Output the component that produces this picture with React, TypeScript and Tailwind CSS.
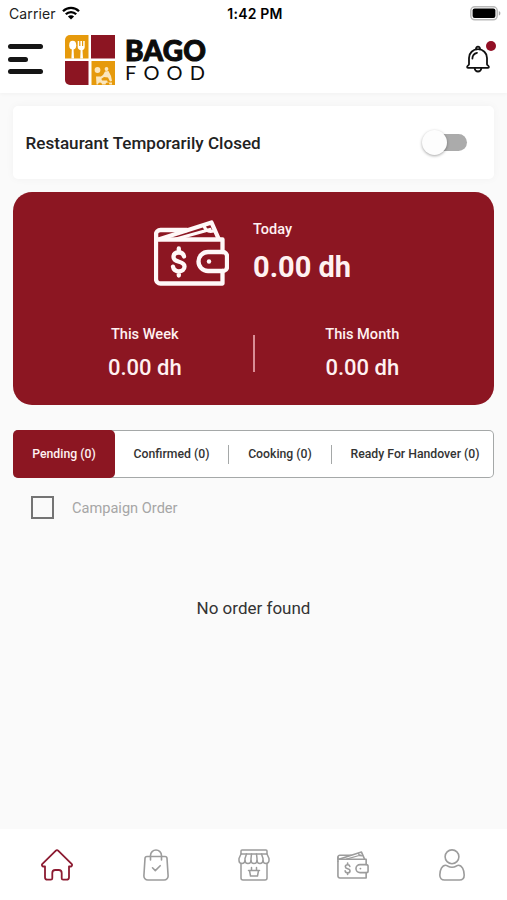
import React from 'react';
import { clsx } from 'clsx';

interface IconProps {
  className?: string;
}

interface WalletIconProps extends IconProps {
  strokeWidth?: number;
}

interface OrderTab {
  label: string;
  count: number;
  className: string;
}

const orderTabs: OrderTab[] = [
  { label: 'Pending', count: 0, className: 'w-[102px]' },
  { label: 'Confirmed', count: 0, className: 'w-[114px]' },
  { label: 'Cooking', count: 0, className: 'w-[103px]' },
  { label: 'Ready For Handover', count: 0, className: 'flex-1 pl-[5px]' },
];

// Icons
const WifiIcon: React.FC<IconProps> = ({ className }) => (
  <svg className={className} viewBox="0 0 18 14" fill="none" stroke="black" strokeWidth="2.3">
    <path d="M1 5.2a11.4 11.4 0 0 1 16 0" />
    <path d="M3.8 8.3a7.3 7.3 0 0 1 10.4 0" />
    <path d="M9 13.6 5.9 10.5a4.3 4.3 0 0 1 6.2 0z" fill="black" stroke="none" />
  </svg>
);

const BatteryIcon: React.FC<IconProps> = ({ className }) => (
  <svg className={className} viewBox="0 0 31 15" fill="none">
    <rect x="0.8" y="0.8" width="26.4" height="13" rx="4" stroke="#b9b9b9" strokeWidth="1.5" />
    <rect x="2.6" y="2.6" width="22.8" height="9.4" rx="2" fill="black" />
    <path d="M28.8 5v4.6c1-.4 1.6-1.3 1.6-2.3s-.6-1.9-1.6-2.3z" fill="#a8a8a8" />
  </svg>
);

const BellIcon: React.FC<IconProps> = ({ className }) => (
  <svg
    className={className}
    viewBox="0 0 24 28"
    fill="none"
    stroke="#111"
    strokeWidth="1.8"
    strokeLinecap="round"
    strokeLinejoin="round"
  >
    <path d="M10.1 4.3a2 2 0 1 1 3.8 0" />
    <path d="M12 4.2c-5 0-9 3.9-9 8.7v6.3c0 1.1-1.9 1.4-1.9 2.9 0 .5.4.8.9.8h20c.5 0 .9-.3.9-.8 0-1.5-1.900-1.800-1.900-2.900v-6.300c0-4.800-4-8.700-9-8.700z" />
    <path d="M8.700 23.200a3.300 3.300 0 0 0 6.600 0" />
    <path d="M6.400 13.500a5.900 5.900 0 0 1 4.600-5.700" />
  </svg>
);

const WalletIcon: React.FC<WalletIconProps> = ({ className, strokeWidth = 4 }) => (
  <svg
    className={className}
    viewBox="0 0 75 66"
    fill="none"
    stroke="currentColor"
    strokeWidth={strokeWidth}
    strokeLinecap="round"
    strokeLinejoin="round"
  >
    <path d="M68.500 51v12.500H6.500a4.500 4.500 0 0 1-4.500-4.500V24M2 14.500v5H68.500V32" />
    <path d="M2 24v-9.500A4.500 4.500 0 0 1 6.500 10H33" />
    <path d="M6 19 57.500 2.500 64.500 18.500" />
    <path d="M22 19 56 9.500M50 6c1.500 4.500 5 6 9.500 5" strokeWidth={strokeWidth * 0.75} />
    <path d="M54 32h15a4 4 0 0 1 4 4v11a4 4 0 0 1-4 4H54a9.500 9.500 0 0 1 0-19z" />
    <circle cx="55" cy="41.500" r="2.200" fill="currentColor" stroke="none" />
    <path d="M30 36.500c-.5-3-2.500-4-5.200-4-3.300 0-5.300 1.700-5.300 4.500 0 6.500 11 3 11 9.500 0 3-2.400 4.800-5.700 4.800-3.200 0-5.300-1.600-5.800-4.600M24.800 28.500v4M24.800 51.500v4" />
  </svg>
);

const HomeIcon: React.FC<IconProps> = ({ className }) => (
  <svg
    className={className}
    viewBox="0 0 32 32"
    fill="none"
    stroke="currentColor"
    strokeWidth="1.800"
    strokeLinecap="round"
    strokeLinejoin="round"
  >
    <path d="M14.600 1.800a2 2 0 0 1 2.800 0L30.600 14.800c1 1 .3 2.700-1.200 2.700H28v10.700a2.500 2.500 0 0 1-2.500 2.500h-3.300a1.500 1.500 0 0 1-1.500-1.500v-5.200a3 3 0 0 0-3-3h-3.400a3 3 0 0 0-3 3v5.200a1.500 1.500 0 0 1-1.500 1.500H6.500A2.500 2.500 0 0 1 4 28.200V17.500H2.600c-1.500 0-2.200-1.700-1.200-2.700z" />
  </svg>
);

const OrdersIcon: React.FC<IconProps> = ({ className }) => (
  <svg
    className={className}
    viewBox="0 0 26 32"
    fill="none"
    stroke="currentColor"
    strokeWidth="1.600"
    strokeLinecap="round"
    strokeLinejoin="round"
  >
    <path d="M4 7.500h18a2 2 0 0 1 2 1.900l1.100 17.300a4 4 0 0 1-4 4.300H4.900a4 4 0 0 1-4-4.300L2 9.400a2 2 0 0 1 2-1.900z" />
    <path d="M7.500 11V6.500a5.500 5.500 0 0 1 11 0V11" />
    <path d="m9.500 18.800 2.800 2.800 4.900-4.900" />
  </svg>
);

const StoreIcon: React.FC<IconProps> = ({ className }) => (
  <svg
    className={className}
    viewBox="0 0 32 32"
    fill="none"
    stroke="currentColor"
    strokeWidth="1.500"
    strokeLinecap="round"
    strokeLinejoin="round"
  >
    <path d="M4 1h24a1 1 0 0 1 1 1v3H3V2a1 1 0 0 1 1-1z" />
    <path d="M3 5 1 9.500v2a3 3 0 0 0 6 0 3 3 0 0 0 6 0 3 3 0 0 0 6 0 3 3 0 0 0 6 0 3 3 0 0 0 6 0v-2L29 5" />
    <path d="M8.500 5 7 9.500v2M13.500 5 13 9.500v2M18.500 5l.5 4.500v2M23.500 5 25 9.500v2" />
    <path d="M3 14.500V29a2 2 0 0 0 2 2h22a2 2 0 0 0 2-2V14.500" />
    <path d="M10.500 21.500h11M11.500 21.500l1 5.500h7l1-5.500M13.500 18.500v3M18.500 18.500v3" />
  </svg>
);

const ProfileIcon: React.FC<IconProps> = ({ className }) => (
  <svg
    className={className}
    viewBox="0 0 26 32"
    fill="none"
    stroke="currentColor"
    strokeWidth="1.600"
    strokeLinejoin="round"
  >
    <circle cx="13" cy="7.800" r="6.900" />
    <path d="M6.500 16.200c1 0 1.600.5 2.500 1 1.200.7 2.500 1 4 1s2.800-.3 4-1c.9-.5 1.500-1 2.500-1 3.300 0 5.700 4.600 5.700 9.800 0 3-1.800 5-4.700 5h-15c-2.900 0-4.700-2-4.700-5 0-5.200 2.400-9.800 5.700-9.800z" />
  </svg>
);

const LogoMark: React.FC<IconProps> = ({ className }) => (
  <svg className={className} viewBox="0 0 50 50">
    <path d="M5 0h18.500v23.500H0V5a5 5 0 0 1 5-5z" fill="#e69a0c" />
    <path d="M26 0h24v23.500H26z" fill="#8c1522" />
    <path d="M0 26h23.500v24H5a5 5 0 0 1-5-5z" fill="#8c1522" />
    <path d="M26.500 26H50v24H26.500z" fill="#e69a0c" />
    <g fill="white">
      <ellipse cx="7.700" cy="10.200" rx="3.500" ry="4.400" />
      <path d="M6.900 13h1.600l.5 10.500H6.400z" />
      <path d="M12.700 6h1.500v5h1.200V6h1.600v5h1.200V6h1.500v6c0 1.800-1 2.800-2.200 3.200l.5 8.300h-2.800l.4-8.300c-1.700-.4-2.900-1.500-2.900-3.200z" />
    </g>
    <g fill="#fbe6bd">
      <circle cx="32.500" cy="35" r="2.900" />
      <circle cx="41.500" cy="34" r="1.900" />
      <path d="m40 36.500 3.500-.5 2.500 5 1 5-2 .5-2-4-4-.5-3 2-1.500-1.500 3.500-2.500z" />
      <path d="M31 41.500h4.500l1.500 4h5l1 2h4v2h-2.500a2 2 0 0 0-4 0H37a2 2 0 0 0-4 0h-1.500z" />
    </g>
  </svg>
);

// Page sections
const StatusBar: React.FC = () => (
  <div className="grid h-7 grid-cols-3 items-center pl-[9px] pr-[6px] font-['Inter',sans-serif] text-[14px] leading-4 text-black">
    <div className="flex items-center gap-[6px]">
      <span className="tracking-[0.1px] text-[#222]">Carrier</span>
      <WifiIcon className="-mt-[2px] h-[14px] w-[18px]" />
    </div>
    <span className="text-center font-semibold tracking-[0.2px]">1:42 PM</span>
    <BatteryIcon className="-mt-[2px] h-[15px] w-[31px] justify-self-end" />
  </div>
);

const Header: React.FC = () => (
  <header className="flex h-[65px] items-start pl-2 pr-[17px]">
    <button aria-label="Menu" className="mt-4 flex w-[35px] flex-col gap-[7.500px]">
      <span className="h-[5px] w-[35px] rounded-full bg-[#151515]" />
      <span className="h-[5px] w-5 rounded-full bg-[#151515]" />
      <span className="h-[5px] w-[35px] rounded-full bg-[#151515]" />
    </button>
    <LogoMark className="ml-[22px] mt-[7px] h-[50px] w-[50px]" />
    <div className="ml-[10px] mt-[11px] flex flex-col text-[#0c0c0c]">
      <span className="font-['Lato',sans-serif] text-[28px] font-black leading-[23px] tracking-[0.200px] [-webkit-text-stroke:1px_#0c0c0c]">
        BAGO
      </span>
      <span className="font-['Lato',sans-serif] text-[20px] leading-[20px] tracking-[7.200px]">FOOD</span>
    </div>
    <button aria-label="Notifications" className="relative ml-auto mt-[17px]">
      <BellIcon className="h-7 w-6" />
      <span className="absolute -right-[6px] -top-1 size-[10px] rounded-full bg-[#920f25]" />
    </button>
  </header>
);

const ClosedCard: React.FC = () => (
  <section className="flex h-[73px] items-center justify-between rounded-[5px] bg-white pl-[12.500px] pr-[27px] shadow-[0_0_8px_rgba(0,0,0,0.04)]">
    <span className="text-[17.100px] font-medium leading-5 text-[#222]">Restaurant Temporarily Closed</span>
    <button
      role="switch"
      aria-checked="false"
      aria-label="Restaurant Temporarily Closed"
      className="flex h-[17px] w-[41px] items-center rounded-full bg-[#ababab]"
    >
      <span className="-ml-1 size-[25px] rounded-full bg-[#fdfdfd] shadow-[0_1px_3px_rgba(0,0,0,0.35)]" />
    </button>
  </section>
);

const EarningColumn: React.FC<{ label: string; value: string }> = ({ label, value }) => (
  <div className="flex flex-1 flex-col items-center gap-[10px]">
    <span className="text-[14.600px] font-medium leading-5">{label}</span>
    <span className="text-[22px] font-medium leading-7">{value}</span>
  </div>
);

const EarningsCard: React.FC = () => (
  <section className="mt-[13px] h-[213px] rounded-[19px] bg-[#8c1622] pt-7 text-[#fff1f1]">
    <div className="flex pl-[141px]">
      <WalletIcon className="h-[66px] w-[75px] text-[#fff8f8]" strokeWidth={4.3} />
      <div className="ml-6 flex flex-col">
        <span className="text-[14.500px] font-medium leading-5">Today</span>
        <span className="mt-[9px] text-[29px] font-bold leading-9">0.00 dh</span>
      </div>
    </div>
    <div className="mt-[38px] flex items-start px-6">
      <EarningColumn label="This Week" value="0.00 dh" />
      <span className="mt-[11px] h-[37px] w-[2px] bg-[#d98d95]" />
      <EarningColumn label="This Month" value="0.00 dh" />
    </div>
  </section>
);

const OrderTabs: React.FC = () => {
  const [active, setActive] = React.useState('Pending');

  return (
    <div
      role="tablist"
      className="mt-[25px] flex h-12 rounded-[5px] border border-l-0 border-[#a5a8a8] bg-white"
    >
      {orderTabs.map((tab, index) => (
        <button
          key={tab.label}
          role="tab"
          aria-selected={active === tab.label}
          onClick={() => setActive(tab.label)}
          className={clsx(
            'flex items-center whitespace-nowrap text-[12.250px] font-medium',
            tab.className,
            active === tab.label
              ? '-my-px h-12 rounded-[5px] bg-[#8c1622] text-[#fff1f1]'
              : 'text-[#333]'
          )}
        >
          <span className="flex-1 text-center">
            {tab.label} ({tab.count})
          </span>
          {index > 0 && index < orderTabs.length - 1 && (
            <span className="h-[19px] w-px bg-[#a5a8a8]" />
          )}
        </button>
      ))}
    </div>
  );
};

const BottomNav: React.FC = () => (
  <nav className="flex h-[71px] items-center bg-white pl-2 pr-[6px] text-[#9c9c9c]">
    <button aria-label="Home" className="flex flex-1 justify-center text-[#8c1b31]">
      <HomeIcon className="size-8" />
    </button>
    <button aria-label="Orders" className="flex flex-1 justify-center">
      <OrdersIcon className="h-8 w-[26px]" />
    </button>
    <button aria-label="Restaurant" className="flex flex-1 justify-center">
      <StoreIcon className="size-8" />
    </button>
    <button aria-label="Wallet" className="flex flex-1 justify-center">
      <WalletIcon className="h-[28px] w-[32px]" strokeWidth={3.8} />
    </button>
    <button aria-label="Profile" className="flex flex-1 justify-center">
      <ProfileIcon className="h-8 w-[26px]" />
    </button>
  </nav>
);

export default function App() {
  return (
    <div className="flex h-[900px] w-[507px] flex-col overflow-hidden bg-[#fafafa] font-['Roboto',sans-serif]">
      <div className="bg-white shadow-[0_1px_4px_rgba(0,0,0,0.04)]">
        <StatusBar />
        <Header />
      </div>
      <main className="flex-1 px-[13px] pt-[13px]">
        <ClosedCard />
        <EarningsCard />
        <OrderTabs />
        <label className="mt-[18px] flex items-center gap-[18px] pl-[18px]">
          <span className="size-[23px] border-[2.500px] border-[#747474]" />
          <span className="text-[14.600px] leading-5 text-[#a6a6a6]">Campaign Order</span>
        </label>
        <p className="mt-[77px] text-center text-[17px] leading-6 text-[#333]">No order found</p>
      </main>
      <BottomNav />
    </div>
  );
}
